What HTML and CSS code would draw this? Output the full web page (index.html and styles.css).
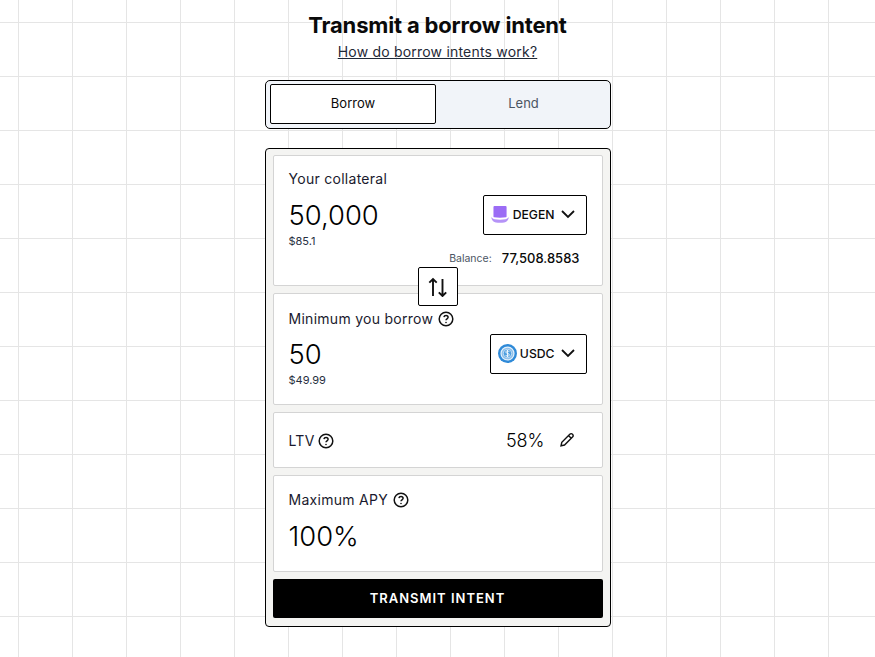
FILE: index.html
```html
<!DOCTYPE html>
<html lang="en">
<head>
    <meta charset="utf-8">
    <meta name="viewport" content="width=device-width, initial-scale=1">
    <title>Transmit a borrow intent</title>
    <link rel="stylesheet" href="styles.css">
</head>
<body>

    <div class="header">
        <h1>Transmit a borrow intent</h1>
        <a class="howLink" href="#">How do borrow intents work?</a>
    </div>

    <div class="tabs">
        <button class="tab tabActive">Borrow</button>
        <button class="tab">Lend</button>
    </div>

    <div class="card">
        <div class="panel panelCollateral">
            <div class="label">Your collateral</div>
            <div class="amountRow">
                <div>
                    <div class="amount">50,000</div>
                    <div class="usd">$85.1</div>
                </div>
                <button class="tokenButton">
                    <svg class="tokenIcon" viewBox="0 0 20 20">
                        <path d="M2.600 2c0-.6.4-1 1-1h11.800c.6 0 1 .4 1 1v10.200c0 .4-.3.7-.7.8-3.800.7-8.600.7-12.400 0-.4-.1-.7-.4-.7-.8z" fill="#9b6cf5"/>
                        <path d="M.5 12.500c1 1.400 2 2.100 3.400 2.400 3.400.7 7.800.7 11.200 0 1.400-.3 2.400-1 3.400-2.400v1.700c-.8 2.500-2.400 3.700-4.600 4.100-2.800.5-6 .5-8.800 0-2.200-.4-3.800-1.600-4.600-4.100z" fill="#b593f7"/>
                    </svg>
                    <span>DEGEN</span>
                    <svg class="chevron" viewBox="0 0 14 14"><path d="M1 4l6 6 6-6"/></svg>
                </button>
            </div>
            <div class="balance">
                <span class="balanceLabel">Balance:</span>
                <span class="balanceValue">77,508.8583</span>
            </div>
            <button class="swapButton">
                <svg viewBox="0 0 20 20"><path d="M5 19V2M1.300 5.700L5 2l3.700 3.700M14.500 2v17M10.800 15.300l3.700 3.700 3.700-3.700"/></svg>
            </button>
        </div>

        <div class="panel panelBorrow">
            <div class="label">Minimum you borrow
                <svg class="help" viewBox="0 0 16 16">
                    <circle cx="8" cy="8" r="6.800"/>
                    <path d="M5.900 6.200c.2-1.100 1-1.700 2.100-1.700 1.200 0 2.100.8 2.100 1.800 0 1.500-2.100 1.600-2.100 3"/>
                    <circle class="helpDot" cx="8" cy="11.500" r=".8"/>
                </svg>
            </div>
            <div class="amountRow">
                <div>
                    <div class="amount">50</div>
                    <div class="usd">$49.99</div>
                </div>
                <button class="tokenButton">
                    <svg class="tokenIcon" viewBox="0 0 20 20">
                        <circle cx="10" cy="10" r="10" fill="#2f8ad8"/>
                        <circle cx="10" cy="10" r="6.800" fill="#8fc0ea" stroke="#e4f0fa" stroke-width="1.300"/>
                        <circle cx="10" cy="10" r="4.400" fill="#4f9fe0" stroke="#d5e7f7" stroke-width=".8"/>
                        <path d="M11.800 8.300c-.3-.8-1-1.100-1.800-1.100-1 0-1.800.5-1.800 1.300 0 1.800 3.700.9 3.700 2.900 0 .9-.9 1.400-1.900 1.400-.9 0-1.700-.4-1.900-1.200M10 6.200v7.600" fill="none" stroke="#fff" stroke-width=".9"/>
                    </svg>
                    <span>USDC</span>
                    <svg class="chevron" viewBox="0 0 14 14"><path d="M1 4l6 6 6-6"/></svg>
                </button>
            </div>
        </div>

        <div class="panel panelLtv">
            <div class="label">LTV
                <svg class="help helpTight" viewBox="0 0 16 16">
                    <circle cx="8" cy="8" r="6.800"/>
                    <path d="M5.900 6.200c.2-1.100 1-1.700 2.100-1.700 1.200 0 2.100.8 2.100 1.800 0 1.500-2.100 1.600-2.100 3"/>
                    <circle class="helpDot" cx="8" cy="11.500" r=".8"/>
                </svg>
            </div>
            <div class="ltvValue">
                <span>58%</span>
                <svg class="pencil" viewBox="0 0 16 16"><path d="M10.800 2.300a1.900 1.900 0 0 1 2.700 2.700l-8 8-3.500.8.800-3.500zM9.500 3.600l2.700 2.700"/></svg>
            </div>
        </div>

        <div class="panel panelApy">
            <div class="label">Maximum APY
                <svg class="help" viewBox="0 0 16 16">
                    <circle cx="8" cy="8" r="6.800"/>
                    <path d="M5.900 6.200c.2-1.100 1-1.700 2.100-1.700 1.200 0 2.100.8 2.100 1.800 0 1.500-2.100 1.600-2.100 3"/>
                    <circle class="helpDot" cx="8" cy="11.500" r=".8"/>
                </svg>
            </div>
            <div class="amount amountApy">100%</div>
        </div>

        <button class="submitButton">TRANSMIT INTENT</button>
    </div>

</body>
</html>
```

FILE: styles.css
```css
* {
    margin: 0;
    padding: 0;
    box-sizing: border-box;
    font-family: 'Inter', 'Liberation Sans', sans-serif;
}

body {
    min-height: 657px;
    padding-top: 13px;
    display: flex;
    flex-direction: column;
    align-items: center;
    color: #0a0a0a;
    background-color: #fff;
    background-image:
        linear-gradient(#e5e5e5 1px, transparent 1px),
        linear-gradient(90deg, #e5e5e5 1px, transparent 1px);
    background-size: 54px 54px;
    background-position: 18px 22px;
}

button {
    background: #fff;
    color: inherit;
    border: none;
    cursor: pointer;
}

.header {
    text-align: center;
    height: 67px;
}

.header h1 {
    font-size: 22px;
    line-height: 25px;
    font-weight: 700;
    letter-spacing: -0.17px;
}

.howLink {
    display: block;
    margin-top: 4px;
    font-size: 14px;
    line-height: 20px;
    letter-spacing: 0.2px;
    color: #1f2937;
}

.tabs {
    width: 346px;
    height: 49px;
    padding: 3px 4px;
    display: flex;
    background: #f1f4f9;
    border: 1px solid #000;
    border-radius: 5px;
}

.tab {
    flex: 1;
    height: 40px;
    padding: 0 0 2px 6px;
    font-size: 13px;
    color: #4b5563;
    background: transparent;
}

.tabActive {
    flex: 0 0 166px;
    padding-left: 1px;
    background: #fff;
    color: #0a0a0a;
    border: 1px solid #000;
    border-radius: 2px;
}

.card {
    width: 346px;
    margin-top: 19px;
    padding: 6px 7px 8px;
    display: flex;
    flex-direction: column;
    gap: 7px;
    background: #f4f4f2;
    border: 1px solid #000;
    border-radius: 4px;
}

.panel {
    position: relative;
    padding: 15px;
    background: #fff;
    border: 1px solid #d4d4d4;
    border-radius: 2px;
}

.panelCollateral {
    height: 131px;
    padding-top: 14px;
}

.panelCollateral .amountRow {
    margin-top: 8px;
}

.panelBorrow {
    height: 112px;
    padding-top: 16px;
}

.panelLtv {
    height: 56px;
    padding: 0 27px 0 15px;
    display: flex;
    align-items: center;
    justify-content: space-between;
}

.panelLtv .label {
    padding-top: 2px;
}

.panelApy {
    height: 97px;
}

.label {
    display: flex;
    align-items: center;
    padding-top: 1px;
    font-size: 14px;
    line-height: 16px;
    letter-spacing: 0.02em;
    color: #1a1a2e;
}

.help {
    width: 16px;
    height: 16px;
    margin-left: 5px;
    fill: none;
    stroke: #111;
    stroke-width: 1.500;
}

.helpTight {
    margin-left: 3px;
}

.helpDot {
    fill: #111;
    stroke: none;
}

.amountRow {
    display: flex;
    justify-content: space-between;
    margin-top: 7px;
}

.amount {
    font-size: 27.400px;
    line-height: 32px;
    font-weight: 300;
    color: #000;
    margin-top: 4px;
}

.amountApy {
    margin-top: 12px;
}

.usd {
    margin-top: 3px;
    font-size: 11px;
    line-height: 14px;
    color: #27303f;
}

.tokenButton {
    height: 40px;
    padding: 0 11px 2px 7px;
    display: flex;
    align-items: center;
    font-size: 12.200px;
    font-weight: 500;
    border: 1px solid #000;
    border-radius: 2px;
}

.tokenIcon {
    width: 19px;
    height: 19px;
    margin-right: 3px;
}

.chevron {
    width: 14px;
    height: 14px;
    margin-left: 6px;
    fill: none;
    stroke: #111;
    stroke-width: 1.800;
}

.balance {
    margin-top: 2px;
    margin-right: 7px;
    display: flex;
    justify-content: flex-end;
    align-items: center;
    gap: 10px;
}

.balanceLabel {
    font-size: 10.500px;
    color: #4b5563;
}

.balanceValue {
    font-size: 13px;
    font-weight: 500;
}

.swapButton {
    position: absolute;
    left: 144px;
    bottom: -21px;
    width: 40px;
    height: 39px;
    display: flex;
    align-items: center;
    justify-content: center;
    border: 1px solid #000;
    border-radius: 2px;
    z-index: 1;
}

.swapButton svg {
    width: 20px;
    height: 20px;
    fill: none;
    stroke: #111;
    stroke-width: 1.900;
}

.ltvValue {
    display: flex;
    align-items: center;
    gap: 14px;
    font-size: 18px;
    font-weight: 300;
    color: #000;
}

.pencil {
    width: 16px;
    height: 16px;
    fill: none;
    stroke: #111;
    stroke-width: 1.400;
}

.submitButton {
    height: 39px;
    padding-bottom: 2px;
    background: #000;
    color: #fff;
    font-size: 13px;
    font-weight: 600;
    letter-spacing: 1px;
    border-radius: 2px;
}
```
